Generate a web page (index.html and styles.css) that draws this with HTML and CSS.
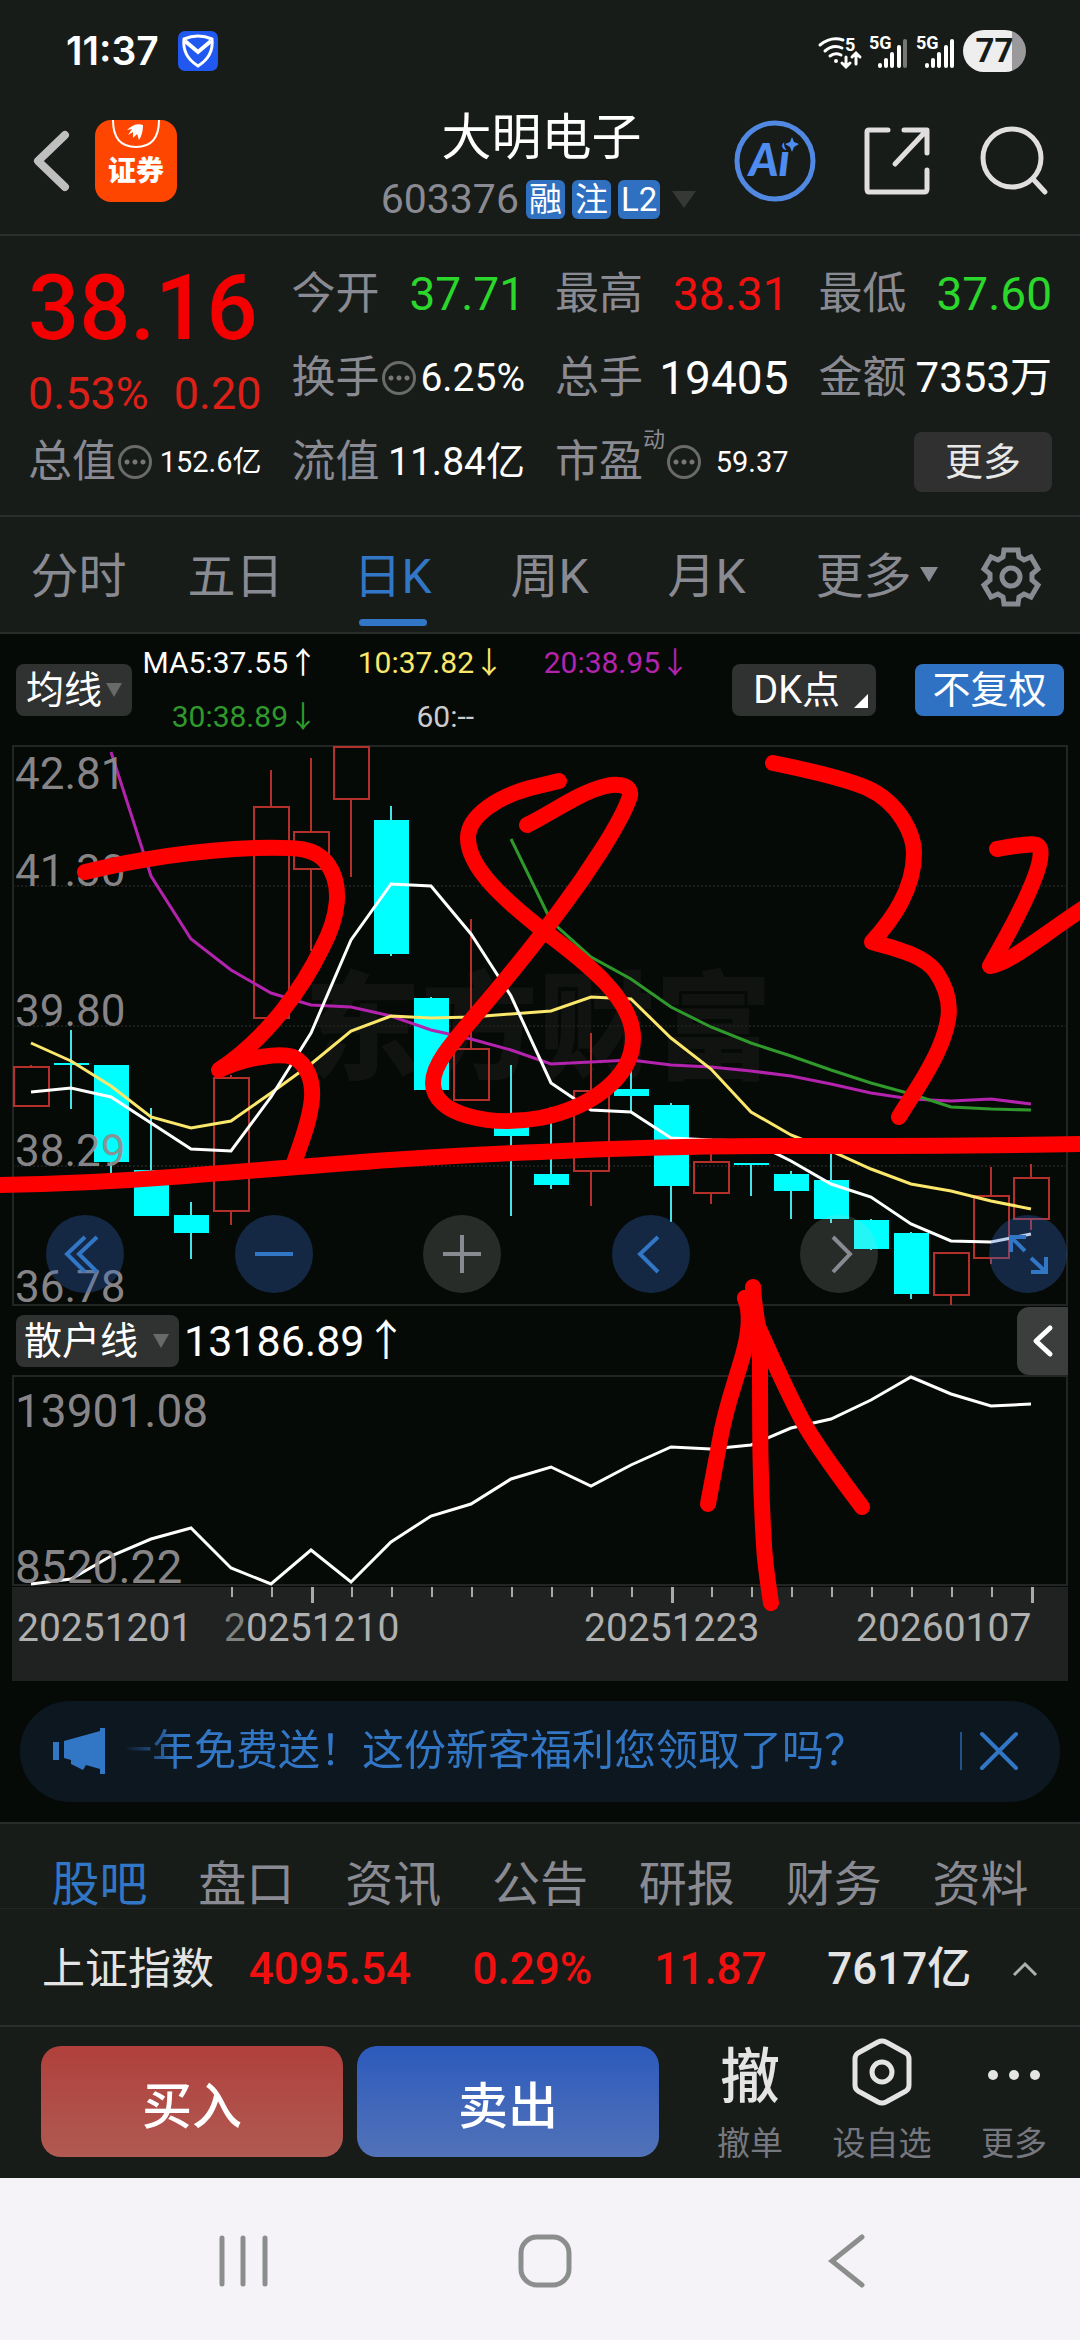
FILE: index.html
```html
<!DOCTYPE html>
<html lang="zh-CN">
<head>
    <meta charset="UTF-8">
    <meta name="viewport" content="width=device-width, initial-scale=1.0">
    <title>大明电子 603376</title>
    <link rel="stylesheet" href="styles.css">
</head>
<body>
    <div class="status-bar">
        <span class="clock">11:37</span>
        <svg class="shield" width="40" height="40" viewBox="0 0 40 40">
            <rect width="40" height="40" rx="7" fill="#2058f0"/>
            <path d="M6 8 Q20 2 34 8 Q36 25 20 35 Q4 25 6 8 Z" fill="none" stroke="#fff" stroke-width="3"/>
            <path d="M7 10 L20 21 L33 10" fill="none" stroke="#fff" stroke-width="4"/>
        </svg>
        <div class="status-right">
            <svg width="44" height="36" viewBox="0 -2 44 36" fill="none" stroke="#fff" stroke-width="3" stroke-linecap="round">
                <path d="M2 10 Q13 1 25 5"/>
                <path d="M7 16 Q15 9 24 13"/>
                <path d="M12 21 Q17 17 23 20"/>
                <circle cx="18" cy="26" r="1" fill="#fff" stroke-width="2"/>
                <path d="M28 22 V31 M24 28 L28 32 L32 28 M38 29 V19 M34 22 L38 18 L42 22"/>
                <text x="27" y="16" class="net-text">5</text>
            </svg>
            <svg width="40" height="40" viewBox="0 -4 40 40">
                <text x="0" y="14" class="net-text">5G</text>
                <g fill="#fff">
                    <rect x="9" y="28" width="4" height="5" rx="2"/>
                    <rect x="15" y="23" width="4" height="10" rx="2"/>
                    <rect x="21" y="17" width="4" height="16" rx="2"/>
                    <rect x="28" y="10" width="4" height="23" rx="2"/>
                    <rect x="34" y="4" width="4" height="29" rx="2" fill="#777"/>
                </g>
            </svg>
            <svg width="40" height="40" viewBox="0 -4 40 40">
                <text x="0" y="14" class="net-text">5G</text>
                <g fill="#fff">
                    <rect x="9" y="28" width="4" height="5" rx="2"/>
                    <rect x="15" y="23" width="4" height="10" rx="2"/>
                    <rect x="21" y="17" width="4" height="16" rx="2"/>
                    <rect x="28" y="10" width="4" height="23" rx="2"/>
                    <rect x="34" y="4" width="4" height="29" rx="2"/>
                </g>
            </svg>
            <span class="battery">77</span>
        </div>
    </div>

    <header class="header">
        <div class="header-left">
            <button type="button" class="icon-btn" aria-label="返回">
                <svg width="38" height="62" viewBox="0 0 38 62" fill="none" stroke="#bfbfbf" stroke-width="8" stroke-linecap="round" stroke-linejoin="round">
                    <path d="M32 5 L5 31 L32 57"/>
                </svg>
            </button>
            <a href="#" class="app-logo">
                <svg width="82" height="36" viewBox="0 0 82 36">
                    <path d="M18 0 Q18 27 41 27 Q64 27 64 0" fill="none" stroke="#fff" stroke-width="2"/>
                    <path d="M32 10 Q40 2 48 5 Q48 14 44 20 L42 14 L38 18 L38 12 L33 15 L37 9 Z" fill="#fff"/>
                </svg>
                <span>证券</span>
            </a>
        </div>
        <div class="title">
            <h1>大明电子</h1>
            <div class="code">
                <span>603376</span>
                <span class="badge">融</span>
                <span class="badge">注</span>
                <span class="badge">L2</span>
                <span class="tri tri-title"></span>
            </div>
        </div>
        <div class="header-right">
            <button type="button" class="icon-btn" aria-label="AI">
                <svg width="82" height="82" viewBox="0 0 82 82">
                    <circle cx="41" cy="41" r="38" fill="none" stroke="#5088e2" stroke-width="5"/>
                    <text x="15" y="56" class="ai-text">Ai</text>
                    <circle cx="58" cy="24" r="8" fill="#181c19"/>
                    <path d="M58 17 L60 22 L65 24 L60 27 L58 32 L56 27 L51 24 L56 22 Z" fill="#4e8cf0"/>
                </svg>
            </button>
            <button type="button" class="icon-btn" aria-label="分享">
                <svg width="68" height="70" viewBox="0 0 68 70" fill="none" stroke="#e0dede" stroke-width="5" stroke-linecap="round" stroke-linejoin="round">
                    <path d="M25 4 H6 Q4 4 4 6 V63 Q4 66 6 66 H61 Q64 66 64 63 V44"/>
                    <path d="M41 4 H64 V27 M63 5 L32 38"/>
                </svg>
            </button>
            <button type="button" class="icon-btn" aria-label="搜索">
                <svg width="72" height="72" viewBox="0 0 72 72" fill="none" stroke="#e0dede" stroke-width="5" stroke-linecap="round">
                    <circle cx="34" cy="33" r="29"/>
                    <path d="M55 54 L67 67"/>
                </svg>
            </button>
        </div>
    </header>

    <section class="quote">
        <div class="price-box">
            <div class="price">38.16</div>
            <div class="change"><span>0.53%</span><span>0.20</span></div>
        </div>
        <div class="item"><span class="label">今开</span><span class="value down">37.71</span></div>
        <div class="item"><span class="label">最高</span><span class="value up">38.31</span></div>
        <div class="item"><span class="label">最低</span><span class="value down">37.60</span></div>
        <div class="item"><span class="label">换手</span><i class="info"></i><span class="value size-m">6.25%</span></div>
        <div class="item"><span class="label">总手</span><span class="value">19405</span></div>
        <div class="item"><span class="label">金额</span><span class="value size-l">7353万</span></div>
        <div class="item"><span class="label">总值</span><i class="info"></i><span class="value size-s">152.6亿</span></div>
        <div class="item"><span class="label">流值</span><span class="value size-m">11.84亿</span></div>
        <div class="item"><span class="label">市盈</span><sup>动</sup><i class="info"></i><span class="value size-s">59.37</span></div>
        <div class="item"><button type="button" class="more-btn">更多</button></div>
    </section>

    <nav class="period-tabs">
        <a href="#">分时</a>
        <a href="#">五日</a>
        <a href="#" class="active">日K</a>
        <a href="#">周K</a>
        <a href="#">月K</a>
        <a href="#" class="more-tab"><span>更多</span></a>
        <button type="button" class="icon-btn gear" aria-label="设置">
            <svg width="64" height="64" viewBox="-32 -32 64 64" fill="none" stroke="#8a8a92" stroke-width="5">
                <path d="M-8 -20 L-7 -27 L7 -27 L8 -20 L13 -17 L20 -20 L27 -8 L21 -3 L21 3 L27 8 L20 20 L13 17 L8 20 L7 27 L-7 27 L-8 20 L-13 17 L-20 20 L-27 8 L-21 3 L-21 -3 L-27 -8 L-20 -20 L-13 -17 Z"/>
                <circle r="9"/>
            </svg>
        </button>
    </nav>

    <main class="charts">
        <div class="toolbar">
            <button type="button" class="chip">均线<span class="tri"></span></button>
            <div class="ma-list">
                <span class="ma5">MA5:37.55↑</span>
                <span class="ma10">10:37.82↓</span>
                <span class="ma20">20:38.95↓</span>
                <span class="ma30">30:38.89↓</span>
                <span class="ma60">60:--</span>
            </div>
            <button type="button" class="chip dk">DK点<span class="corner"></span></button>
            <button type="button" class="chip blue">不复权</button>
        </div>

        <div class="stage">
            <div class="k-chart">
                <svg viewBox="0 745 1080 561">
                    <text x="304" y="1070" class="watermark">东方财富</text>
                    <rect x="13" y="746" width="1054" height="559" class="frame"/>
                    <path d="M13 886 H1067 M13 1026 H1067 M13 1166 H1067" class="grid-line"/>
                    <g id="candles"></g>
                    <g id="maLines"></g>
                    <g class="axis-label">
                        <text x="15" y="789">42.81</text>
                        <text x="15" y="886">41.30</text>
                        <text x="15" y="1026">39.80</text>
                        <text x="15" y="1166">38.29</text>
                        <text x="15" y="1302">36.78</text>
                    </g>
                </svg>
                <div class="chart-controls">
                    <button type="button" aria-label="最早"><svg viewBox="0 0 78 78"><path d="M39 22 L21 39 L39 57 M51 22 L33 39 L51 57"/></svg></button>
                    <button type="button" aria-label="缩小"><svg viewBox="0 0 78 78"><path d="M20 39 H58"/></svg></button>
                    <button type="button" class="gray" aria-label="放大"><svg viewBox="0 0 78 78"><path d="M20 39 H58 M39 20 V58"/></svg></button>
                    <button type="button" aria-label="左移"><svg viewBox="0 0 78 78"><path d="M46 22 L28 39 L46 57"/></svg></button>
                    <button type="button" class="gray" aria-label="右移"><svg viewBox="0 0 78 78"><path d="M33 22 L50 39 L33 57"/></svg></button>
                    <button type="button" aria-label="全屏"><svg viewBox="0 0 78 78"><path d="M37 22 H22 V37 M22 22 L36 36 M42 43 L57 57 M42 57 H57 V42"/></svg></button>
                </div>
            </div>

            <div class="sub-bar">
                <button type="button" class="chip wide">散户线<span class="tri"></span></button>
                <span class="sub-value">13186.89↑</span>
                <button type="button" class="drawer" aria-label="展开">
                    <svg width="24" height="36" viewBox="0 0 24 36" fill="none" stroke="#fff" stroke-width="5" stroke-linecap="round" stroke-linejoin="round"><path d="M19 5 L5 18 L19 31"/></svg>
                </button>
            </div>

            <svg class="sub-chart" viewBox="0 1375 1080 306">
                <rect x="13" y="1376" width="1054" height="209" class="frame"/>
                <rect x="12" y="1587" width="1056" height="94" fill="#1f2220"/>
                <g id="ticks"></g>
                <g id="subLine"></g>
                <g class="axis-label big">
                    <text x="15" y="1427">13901.08</text>
                    <text x="15" y="1583">8520.22</text>
                </g>
                <g class="date-label">
                    <text x="17" y="1641">20251201</text>
                    <text x="224" y="1641"><tspan class="faded">2</tspan>0251210</text>
                    <text x="584" y="1641">20251223</text>
                    <text x="856" y="1641">20260107</text>
                </g>
            </svg>

            <!-- hand-drawn marks -->
            <svg class="marks" viewBox="0 745 1080 936">
                <path d="M85 872 C143 858 203 850 255 848 C300 847 314 848 326 862 C344 885 338 918 322 948 C304 985 270 1036 219 1070 C250 1056 280 1053 293 1057 C308 1064 313 1082 312 1098 C310 1122 300 1145 294 1163"/>
                <path d="M0 1185 C69 1184 120 1181 172 1177 C300 1167 420 1156 540 1152 C640 1147 700 1146 788 1146 C900 1146 980 1146 1080 1144"/>
                <path d="M559 781 L530 788 C500 796 468 815 468 838 C468 868 505 900 540 928 C590 965 633 1000 633 1038 C633 1078 590 1108 540 1118 C490 1127 433 1115 433 1083 C433 1060 460 1035 505 980 C530 950 545 930 560 910 C585 877 622 822 630 796 C632 786 620 783 606 786 C580 792 555 811 527 825"/>
                <path d="M773 763 C822 773 848 780 867 788 C900 803 914 835 914 853 C914 890 892 920 872 942 C905 951 925 957 936 972 C955 1000 950 1022 940 1046 C928 1075 912 1095 899 1117"/>
                <path d="M997 849 C1020 845 1030 843 1037 845 C1044 848 1040 865 1033 882 C1020 915 1003 942 990 966 C1010 963 1040 937 1084 908"/>
                <path d="M753 1287 C754 1310 759 1325 760 1350 C760 1440 760 1480 764 1545 C765 1565 768 1583 771 1603"/>
                <path d="M745 1298 C750 1310 750 1330 743 1355 C735 1384 726 1405 720 1440 L708 1504"/>
                <path d="M745 1298 C760 1330 785 1390 806 1427 C822 1454 842 1480 862 1507"/>
            </svg>
        </div>

        <div class="banner">
            <svg width="52" height="46" viewBox="0 0 52 46" fill="#3276c6">
                <path d="M0 14 H6 V32 H0 Z M11 13 L47 3 V0 H52 V46 H47 V41 L33 37 L30 42 L18 36 L18 32 L11 30 Z"/>
            </svg>
            <a href="#" class="banner-text">一年免费送！这份新客福利您领取了吗？</a>
            <button type="button" class="banner-close" aria-label="关闭">
                <svg width="40" height="38" viewBox="0 0 40 38" fill="none" stroke="#3276c6" stroke-width="4" stroke-linecap="round"><path d="M3 2 L37 36 M37 2 L3 36"/></svg>
            </button>
        </div>
    </main>

    <nav class="info-tabs">
        <a href="#" class="active">股吧</a>
        <a href="#">盘口</a>
        <a href="#">资讯</a>
        <a href="#">公告</a>
        <a href="#">研报</a>
        <a href="#">财务</a>
        <a href="#">资料</a>
    </nav>

    <div class="index-row">
        <span class="index-name">上证指数</span>
        <span class="up">4095.54</span>
        <span class="up">0.29%</span>
        <span class="up">11.87</span>
        <span>7617亿</span>
        <svg width="26" height="16" viewBox="0 0 26 16" fill="none" stroke="#b0b0b0" stroke-width="3"><path d="M2 14 L13 3 L24 14"/></svg>
    </div>

    <footer class="trade-bar">
        <button type="button" class="trade buy">买入</button>
        <button type="button" class="trade sell">卖出</button>
        <div class="actions">
            <a href="#"><span class="glyph">撤</span><span>撤单</span></a>
            <a href="#">
                <svg class="glyph" width="66" height="68" viewBox="0 0 66 68" fill="none" stroke="#e4e4e4" stroke-width="5" stroke-linejoin="round">
                    <path d="M29 4 Q33 2 37 4 L57 15 Q60 17 60 21 V47 Q60 51 57 53 L37 64 Q33 66 29 64 L9 53 Q6 51 6 47 V21 Q6 17 9 15 Z"/>
                    <circle cx="33" cy="34" r="10"/>
                </svg>
                <span>设自选</span>
            </a>
            <a href="#">
                <svg class="glyph" width="60" height="68" viewBox="0 0 60 68" fill="#e4e4e4">
                    <circle cx="9" cy="37" r="5"/><circle cx="30" cy="37" r="5"/><circle cx="51" cy="37" r="5"/>
                </svg>
                <span>更多</span>
            </a>
        </div>
    </footer>

    <div class="nav-bar">
        <button type="button" class="icon-btn" aria-label="最近任务"><svg width="56" height="56" viewBox="0 0 56 56"><path d="M7 5 V51 M28 5 V51 M50 5 V51"/></svg></button>
        <button type="button" class="icon-btn" aria-label="主屏幕"><svg width="56" height="56" viewBox="0 0 56 56"><rect x="4" y="4" width="48" height="48" rx="16"/></svg></button>
        <button type="button" class="icon-btn" aria-label="后退"><svg width="56" height="56" viewBox="0 0 56 56"><path d="M43 4 L13 28 L43 52"/></svg></button>
    </div>

    <script>
        var STEP = 40;
        var FIRST = 31;

        // type, high, body top, body bottom, low
        var candles = [
            ['up', 1065, 1066, 1107, 1107], ['flat', 1030, 1063, 1063, 1109], ['down', 1065, 1065, 1162, 1176],
            ['down', 1108, 1170, 1216, 1216], ['down', 1202, 1215, 1233, 1259], ['up', 1075, 1077, 1212, 1225],
            ['up', 770, 806, 1019, 1019], ['up', 758, 831, 870, 951], ['up', 746, 746, 800, 877],
            ['down', 806, 820, 954, 956], ['down', 997, 998, 1090, 1090], ['up', 919, 1048, 1101, 1101],
            ['down', 1065, 1124, 1136, 1216], ['down', 1107, 1174, 1185, 1189], ['up', 1033, 1090, 1172, 1206],
            ['down', 1070, 1089, 1096, 1111], ['down', 1103, 1105, 1186, 1222], ['up', 1138, 1161, 1194, 1204],
            ['flat', 1163, 1163, 1163, 1196], ['down', 1171, 1174, 1191, 1219], ['down', 1150, 1180, 1219, 1223],
            ['down', 1219, 1220, 1249, 1250], ['down', 1232, 1233, 1294, 1299], ['up', 1252, 1252, 1296, 1305],
            ['up', 1167, 1195, 1259, 1264], ['up', 1164, 1177, 1220, 1230]
        ];

        var lines = [
            { color: '#b323ae', from: 2, y: [752, 876, 939, 970, 993, 1005, 1007, 1016, 1030, 1039, 1050, 1064, 1062, 1060, 1065, 1067, 1071, 1076, 1084, 1093, 1099, 1101, 1099, 1104] },
            { color: '#2f9a2b', from: 12, y: [839, 921, 957, 979, 1007, 1027, 1043, 1056, 1070, 1083, 1094, 1107, 1109, 1110] },
            { color: '#fbe76b', from: 0, y: [1043, 1061, 1086, 1117, 1128, 1121, 1093, 1064, 1031, 1016, 1018, 1017, 1014, 1011, 997, 999, 1038, 1069, 1112, 1135, 1151, 1169, 1184, 1191, 1201, 1209] },
            { color: '#ffffff', from: 0, y: [1092, 1088, 1097, 1123, 1149, 1151, 1097, 1033, 940, 884, 886, 934, 996, 1083, 1110, 1112, 1138, 1140, 1141, 1161, 1184, 1197, 1224, 1241, 1242, 1234] }
        ];

        var retail = { color: '#ffffff', from: 0, y: [1584, 1579, 1556, 1539, 1528, 1568, 1584, 1550, 1582, 1542, 1516, 1504, 1479, 1467, 1486, 1465, 1447, 1449, 1445, 1428, 1419, 1400, 1377, 1394, 1406, 1404] };

        function xAt(i) {
            return FIRST + i * STEP;
        }

        function drawCandle(c, i) {
            var x = xAt(i);
            if (c[0] === 'up') {
                return '<path class="up-candle" d="M' + x + ' ' + c[1] + ' V' + c[2] + ' M' + x + ' ' + c[3] + ' V' + c[4] + '"/>' +
                    '<rect class="up-candle" x="' + (x - 17) + '" y="' + (c[2] + 1) + '" width="35" height="' + (c[3] - c[2] - 2) + '"/>';
            }
            return '<path class="down-wick" d="M' + x + ' ' + c[1] + ' V' + c[4] + '"/>' +
                '<rect class="down-candle" x="' + (x - 17) + '" y="' + c[2] + '" width="35" height="' + Math.max(2, c[3] - c[2]) + '"/>';
        }

        function drawLine(line) {
            var points = line.y.map(function (y, i) {
                return xAt(i + line.from) + ',' + y;
            });
            return '<polyline class="line" stroke="' + line.color + '" points="' + points.join(' ') + '"/>';
        }

        function drawTicks() {
            var html = '';
            for (var i = 5; i < 26; i++) {
                var major = i === 7 || i === 16 || i === 25;
                html += '<rect fill="#a8aaa9" x="' + xAt(i) + '" y="1587" width="' + (major ? 3 : 2) + '" height="' + (major ? 16 : 10) + '"/>';
            }
            return html;
        }

        document.getElementById('candles').innerHTML = candles.map(drawCandle).join('');
        document.getElementById('maLines').innerHTML = lines.map(drawLine).join('');
        document.getElementById('subLine').innerHTML = drawLine(retail);
        document.getElementById('ticks').innerHTML = drawTicks();
    </script>
</body>
</html>
```
FILE: styles.css
```css
* {
    box-sizing: border-box;
}
body {
    margin: 0;
    background-color: #181c19;
    color: #fff;
    font-family: Roboto, "Noto Sans CJK SC", sans-serif;
    overflow-x: hidden;
}
a {
    color: inherit;
    text-decoration: none;
}
button {
    border: none;
    padding: 0;
    color: inherit;
    font-family: inherit;
    cursor: pointer;
}
svg {
    display: block;
    overflow: visible;
}
.icon-btn {
    background: none;
}
.up {
    color: #f01010;
}
.down {
    color: #2ad72a;
}

/* status bar */
.status-bar {
    display: flex;
    align-items: center;
    height: 102px;
    padding: 0 54px 0 66px;
}
.clock {
    font: 600 39px/50px Inter, sans-serif;
}
.shield {
    margin-left: 19px;
}
.status-right {
    display: flex;
    align-items: center;
    gap: 7px;
    margin-left: auto;
}
.net-text {
    font: 700 18px Roboto, sans-serif;
    fill: #fff;
    stroke: none;
}
.battery {
    width: 63px;
    border-radius: 21px;
    background: linear-gradient(to right, #eee 77%, #9b999b 77%);
    color: #181c19;
    font-size: 33px;
    font-weight: 700;
    line-height: 42px;
    text-align: center;
}

/* header */
.header {
    display: grid;
    grid-template-columns: 1fr auto 1fr;
    align-items: center;
    height: 134px;
    padding: 0 30px 0 33px;
    border-bottom: 2px solid #2a2d2b;
}
.header-left,
.header-right {
    display: flex;
    align-items: center;
    padding-bottom: 15px;
}
.header-left {
    gap: 24px;
}
.header-right {
    justify-content: flex-end;
    gap: 47px;
}
.app-logo {
    width: 82px;
    height: 82px;
    border-radius: 16px;
    background-color: #ff4600;
    font-size: 28px;
    font-weight: 900;
    line-height: 32px;
    text-align: center;
}
.title h1 {
    margin: 0;
    font-size: 50px;
    font-weight: 400;
    line-height: 62px;
    text-align: center;
}
.code {
    display: flex;
    align-items: center;
    gap: 7px;
    padding-right: 6px;
    color: #8a8a92;
    font-size: 41px;
    line-height: 60px;
}
.badge {
    padding: 0 3px;
    border-radius: 6px;
    background-color: #2f70c0;
    color: #fff;
    font-size: 33px;
    line-height: 39px;
}
.tri {
    border: 8px solid transparent;
    border-top: 14px solid #686a69;
    border-bottom: none;
}
.tri-title {
    margin-left: 5px;
    border-width: 17px 12px 0;
    border-top-color: #363836;
}
.ai-text {
    font: italic 900 45px Lato, sans-serif;
    fill: #4e8cf0;
}

/* quote */
.quote {
    display: grid;
    grid-template-columns: repeat(4, minmax(0, 1fr));
    grid-auto-rows: 84px;
    column-gap: 30px;
    padding: 16px 28px 11px;
    border-bottom: 2px solid #2a2d2b;
}
.price-box {
    grid-row: span 2;
}
.price {
    color: #f50000;
    font-size: 90px;
    font-weight: 500;
    line-height: 114px;
}
.change {
    display: flex;
    justify-content: space-between;
    color: #dc2018;
    font-size: 45px;
    line-height: 56px;
}
.item {
    display: flex;
    align-items: center;
    line-height: 60px;
    white-space: nowrap;
}
.label {
    color: #8a8a92;
    font-size: 44px;
}
.item sup {
    align-self: flex-start;
    color: #8a8a92;
    font-size: 22px;
    line-height: 40px;
}
.info {
    width: 34px;
    height: 34px;
    margin-left: 2px;
    border: 3px solid #6a6a6a;
    border-radius: 50%;
    background: radial-gradient(circle, #777 2px, transparent 3px) center / 8px 8px;
    background-clip: content-box;
    padding: 10px 2px;
}
.value {
    margin-left: auto;
    font-size: 46px;
}
.size-l {
    font-size: 42px;
}
.size-m {
    font-size: 39px;
}
.size-s {
    font-size: 29px;
}
.more-btn {
    width: 138px;
    margin-left: auto;
    border-radius: 8px;
    background-color: #303030;
    color: #e8e8e8;
    font-size: 38px;
    line-height: 60px;
}

/* period tabs */
.period-tabs {
    display: grid;
    grid-template-columns: repeat(6, 157fr) 138fr;
    height: 117px;
    border-bottom: 2px solid #2a2d2b;
    color: #8a8a92;
    font-size: 48px;
    line-height: 119px;
    text-align: center;
}
.period-tabs a {
    position: relative;
}
.period-tabs .active {
    color: #3276c6;
}
.period-tabs .active::after {
    content: "";
    position: absolute;
    left: 50%;
    bottom: 10px;
    width: 68px;
    height: 7px;
    margin-left: -34px;
    border-radius: 4px;
    background-color: #3276c6;
}
.more-tab::after {
    content: "";
    position: absolute;
    right: 4px;
    top: 50px;
    border: 9px solid transparent;
    border-top: 15px solid #8a8a92;
    border-bottom: none;
}
.gear {
    justify-self: center;
}

/* charts */
.charts {
    background-color: #060a07;
}
.toolbar {
    display: flex;
    align-items: center;
    height: 111px;
    padding: 0 16px;
}
.chip {
    display: flex;
    align-items: center;
    justify-content: flex-end;
    gap: 4px;
    width: 116px;
    padding-right: 10px;
    border-radius: 8px;
    background-color: #303131;
    font-size: 38px;
    line-height: 52px;
}
.ma-list {
    display: grid;
    grid-template-columns: repeat(3, 186px);
    font-size: 30px;
    line-height: 54px;
    text-align: right;
    white-space: nowrap;
}
.ma10 {
    color: #fbe76b;
}
.ma20 {
    color: #b323ae;
}
.ma30 {
    color: #2f9a2b;
}
.ma60 {
    padding-right: 30px;
    color: #ccc;
}
.dk {
    width: 144px;
    margin-left: auto;
    padding-right: 8px;
    gap: 14px;
}
.corner {
    align-self: flex-end;
    margin-bottom: 8px;
    border-left: 14px solid transparent;
    border-bottom: 14px solid #fff;
}
.blue {
    justify-content: center;
    width: 149px;
    margin-left: 39px;
    padding: 0;
    background-color: #2f72c4;
}
.stage,
.k-chart {
    position: relative;
}
.frame {
    fill: none;
    stroke: #222523;
    stroke-width: 2;
}
.grid-line {
    stroke: #1b1e1c;
    stroke-width: 2;
    stroke-dasharray: 2 2;
}
.watermark {
    font-size: 117px;
    font-weight: 900;
    fill: #101310;
}
.up-candle {
    fill: none;
    stroke: #b4302a;
    stroke-width: 2;
}
.down-wick {
    stroke: #46e4e6;
    stroke-width: 2;
}
.down-candle {
    fill: #00ffff;
}
.line {
    fill: none;
    stroke-width: 3;
}
.axis-label {
    font-size: 44px;
    fill: #8f8d8f;
    fill-opacity: 0.95;
}
.big {
    font-size: 46px;
}
.date-label {
    font-size: 39px;
    fill: #b0b0b0;
}
.faded {
    fill: #808280;
}
.chart-controls {
    position: absolute;
    left: 46px;
    right: 13px;
    bottom: 13px;
    display: flex;
    justify-content: space-between;
}
.chart-controls button {
    width: 78px;
    height: 78px;
    border-radius: 50%;
    background-color: rgba(50, 105, 200, 0.32);
}
.chart-controls path {
    fill: none;
    stroke: #3276c6;
    stroke-width: 4;
}
.chart-controls .gray {
    background-color: rgba(200, 200, 200, 0.18);
}
.chart-controls .gray path {
    stroke: #8a8a92;
}
.sub-bar {
    display: flex;
    align-items: center;
    height: 69px;
    padding: 0 12px 0 16px;
}
.wide {
    width: 163px;
    gap: 15px;
}
.sub-value {
    margin-left: 5px;
    font-size: 43px;
    line-height: 52px;
}
.drawer {
    display: flex;
    align-items: center;
    justify-content: center;
    width: 51px;
    height: 68px;
    margin-left: auto;
    border-radius: 12px 0 0 12px;
    background-color: #3b3e3c;
}
.marks {
    position: absolute;
    left: 0;
    top: 0;
    width: 100%;
    pointer-events: none;
}
.marks path {
    fill: none;
    stroke: #ff0000;
    stroke-width: 16;
    stroke-linecap: round;
    stroke-linejoin: round;
}
.banner {
    display: flex;
    align-items: center;
    height: 141px;
    padding: 20px 41px 21px 53px;
    position: relative;
    z-index: 0;
    color: #3276c6;
    font-size: 42px;
    line-height: 100px;
}
.banner::before {
    content: "";
    position: absolute;
    z-index: -1;
    inset: 20px;
    border-radius: 50px;
    background-color: #0d1720;
}
.banner-text {
    flex: 1;
    margin-left: 20px;
    overflow: hidden;
    text-indent: -15px;
    white-space: nowrap;
    -webkit-mask-image: linear-gradient(to right, transparent, #000 50px);
    mask-image: linear-gradient(to right, transparent, #000 50px);
}
.banner-close {
    margin-right: 20px;
    padding-left: 17px;
    border-left: 2px solid #22528a;
    background: none;
}

/* info tabs */
.info-tabs {
    display: grid;
    grid-template-columns: repeat(7, 1fr);
    height: 87px;
    padding: 0 26px;
    border-top: 2px solid #2a2d2b;
    border-bottom: 1px solid #232624;
    color: #8a8a92;
    font-size: 48px;
    line-height: 122px;
    text-align: center;
}
.info-tabs .active {
    color: #3276c6;
}
.index-row {
    display: grid;
    grid-template-columns: 207fr 224fr 182fr 173fr 185fr auto;
    align-items: center;
    height: 116px;
    padding: 4px 42px 0;
    color: #e4e4e4;
    font-size: 44px;
    font-weight: 500;
    line-height: 60px;
}
.index-row .index-name {
    font-size: 43px;
    font-weight: 400;
}

/* trade bar */
.trade-bar {
    display: grid;
    grid-template-columns: 302fr 302fr 378fr;
    align-items: center;
    gap: 14px;
    height: 153px;
    padding: 0 29px 2px 41px;
    border-top: 2px solid #2a2d2b;
}
.trade {
    height: 111px;
    border-radius: 20px;
    font-size: 50px;
    font-weight: 500;
}
.buy {
    background: linear-gradient(#b0403c, #b05a52);
}
.sell {
    background: linear-gradient(#2c5abc, #5272b8);
}
.actions {
    display: flex;
    justify-content: space-between;
    padding: 0 4px 0 44px;
}
.actions a {
    display: flex;
    flex-direction: column;
    align-items: center;
    color: #77777f;
    font-size: 33px;
    line-height: 44px;
}
.actions .glyph {
    height: 68px;
    margin-bottom: 16px;
    color: #e4e4e4;
    font-size: 60px;
    font-weight: 500;
    line-height: 80px;
}

/* system navigation */
.nav-bar {
    display: grid;
    grid-template-columns: repeat(3, 1fr);
    place-items: center;
    height: 162px;
    padding: 4px 82px 0 92px;
    background-color: #f6f3f8;
}
.nav-bar path,
.nav-bar rect {
    fill: none;
    stroke: #8c8e8d;
    stroke-width: 5;
    stroke-linecap: round;
}
```
